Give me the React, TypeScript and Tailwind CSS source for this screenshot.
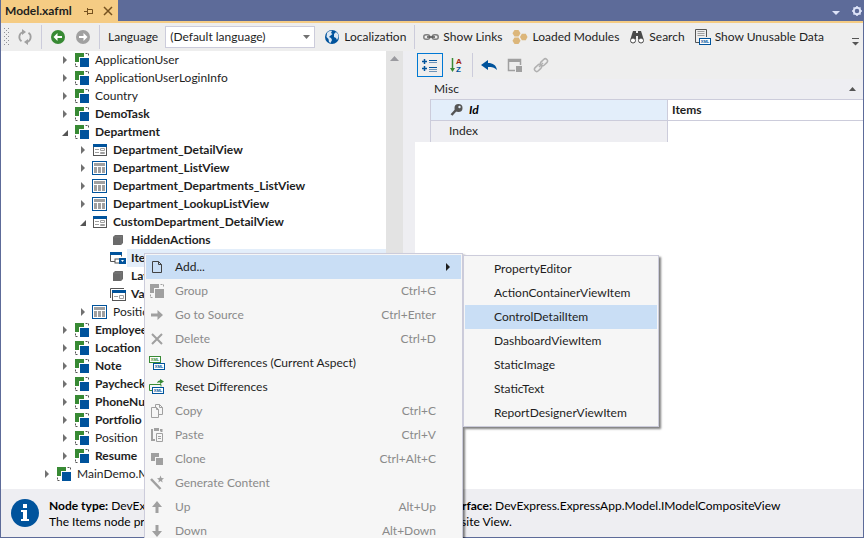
import React, { useState } from 'react';

type IconProps = { children: React.ReactNode; size?: number };

const Icon = ({ children, size = 16 }: IconProps) => (
  <svg width={size} height={size} viewBox={`0 0 ${size} ${size}`} fill="none" className="shrink-0" aria-hidden="true">
    {children}
  </svg>
);

const BLUE = '#00539c';
const GREEN = '#388a34';
const GRAY = '#a0a0a0';
const DARK = '#555555';

const ClassIcon = ({ back = GREEN, front = BLUE, marks = DARK }) => (
  <Icon>
    <path d="M1 1h9v4H5v5H1z" fill={back} />
    <path d="M11.500 1.500h3v3M1.500 11.500v3h3" stroke={marks} strokeDasharray="2 1" />
    <rect x="6" y="6" width="9" height="9" fill={front} />
  </Icon>
);

const DetailIcon = () => (
  <Icon>
    <rect x="1.500" y="2.500" width="13" height="11" fill="#fff" stroke={DARK} />
    <rect x="1" y="2" width="14" height="3" fill={BLUE} />
    <path d="M3 7.500h4M3 10.500h4" stroke={GRAY} />
    <path d="M8.500 6.500h4v2h-4zM8.500 10.500h4v1h-4z" stroke={GRAY} />
  </Icon>
);

const ListIcon = () => (
  <Icon>
    <rect x="0.500" y="1.500" width="14" height="13" fill="#fff" stroke={BLUE} />
    <path d="M2 3h11v3H2zM2 7h3v6H2zM6 7h3v6H6zM10 7h3v6h-3z" fill={GRAY} />
  </Icon>
);

const CubeIcon = () => (
  <Icon>
    <path d="M3 5l2-2h8v8l-2 2H3z" fill="#6a6a6a" />
    <path d="M3 5h8v8M11 5l2-2" stroke="#8a8a8a" strokeWidth="0.500" />
  </Icon>
);

const ItemsIcon = () => (
  <Icon>
    <path d="M0.500 2.500h11v4M0.500 2.500v9h5" stroke={DARK} />
    <rect x="0" y="2" width="12" height="3" fill={BLUE} />
    <rect x="5" y="9" width="5" height="4" fill="#fff" stroke={DARK} />
    <rect x="9" y="8" width="7" height="6" fill={BLUE} />
    <path d="M11 10h3l-1.500 2z" fill="#fff" />
  </Icon>
);

const ValidationIcon = () => (
  <Icon>
    <path d="M0.500 12V2.500H14" stroke={DARK} />
    <rect x="2.500" y="4.500" width="13" height="10" fill="#fff" stroke={DARK} />
    <rect x="2" y="4" width="14" height="3" fill={BLUE} />
    <path d="M4 10.500h4M9.500 9.500h4v3h-4z" stroke={GRAY} />
  </Icon>
);

const RefreshIcon = () => (
  <Icon>
    <path d="M4.500 12.200A5.200 5.200 0 0 1 6 3M11.500 3.800A5.200 5.200 0 0 1 10 13" stroke={GRAY} strokeWidth="1.800" />
    <path d="M5 0l4 3-4 3zM11 10l-4 3 4 3z" fill={GRAY} />
  </Icon>
);

const CircleArrow = ({ color, forward = false }: { color: string; forward?: boolean }) => (
  <Icon>
    <circle cx="8" cy="8" r="7" fill={color} />
    <path
      d={forward ? 'M12.500 8L8.500 4v3H4v2h4.500v3z' : 'M3.500 8l4-4v3H12v2H7.500v3z'}
      fill="#fff"
    />
  </Icon>
);

const GlobeIcon = () => (
  <Icon>
    <circle cx="8" cy="8" r="7" fill={BLUE} />
    <path d="M3 4c1.500-2 4-2.500 5-2l-1 2 1.500 1L6 7l-1 1 2 1 1 2-1.500 3-1.500-1-.5-3-2-2z" fill="#dbe7f3" />
    <path d="M10 5l2-2 2 2 .5 3-1.500 3-1-2-2-1z" fill="#dbe7f3" />
  </Icon>
);

const ShowLinksIcon = () => (
  <Icon>
    <rect x="0.750" y="5.750" width="6" height="4.500" rx="2.250" stroke="#808080" strokeWidth="1.500" />
    <rect x="9.250" y="5.750" width="6" height="4.500" rx="2.250" stroke="#808080" strokeWidth="1.500" />
    <path d="M4 8h8" stroke="#555" strokeWidth="1.500" />
  </Icon>
);

const ModulesIcon = () => (
  <Icon>
    <g fill="#dcb67a">
      <path d="M2.500 1h4l2 3.300-2 3.200h-4l-2-3.200z" />
      <path d="M2.500 8.500h4l2 3.200-2 3.300h-4l-2-3.300z" />
      <path d="M9.800 4.800h4L15.500 8l-1.700 3.300h-4L8 8z" />
    </g>
  </Icon>
);

const SearchIcon = () => (
  <Icon>
    <path d="M4 2h3v2h2V2h3l1 3 1.500 5H9V7H7v3H1.500L3 5z" fill="#4a4a4a" />
    <circle cx="4" cy="11.500" r="2.500" fill="#fff" stroke="#4a4a4a" />
    <circle cx="12" cy="11.500" r="2.500" fill="#fff" stroke="#4a4a4a" />
  </Icon>
);

const XmlTag = ({ x, y, color }: { x: number; y: number; color: string }) => (
  <g>
    <rect x={x + 0.5} y={y + 0.5} width="11" height="6" fill="#fff" stroke={color} />
    <text x={x + 6} y={y + 5} fontSize="4" fontWeight="700" textAnchor="middle" fill={color} fontFamily="Liberation Sans, sans-serif">
      XML
    </text>
  </g>
);

const UnusableIcon = () => (
  <Icon>
    <path d="M4 13.500H0.500V0.500h11V8" stroke={DARK} />
    <path d="M2.500 2.500h7M2.500 4.500h7M2.500 6.500h7" stroke={GRAY} />
    <XmlTag x={4} y={9} color={BLUE} />
  </Icon>
);

const DiffIcon = () => (
  <Icon>
    <XmlTag x={0} y={1} color={GREEN} />
    <XmlTag x={4} y={8} color={BLUE} />
  </Icon>
);

const ResetIcon = () => (
  <Icon>
    <path d="M3 11.500H0.500v-6h11.500v2" stroke={GREEN} />
    <path d="M8 4c.5-2 2-2.500 3-2.500V0l4 2.500L11 5V3.500c-1 0-2 0-3 .5z" fill={GREEN} />
    <XmlTag x={3} y={8} color={BLUE} />
  </Icon>
);

const FileIcon = () => (
  <Icon>
    <path d="M3.500 2.500h6l3 3v8h-9z" stroke="#424242" />
    <path d="M9.500 2.500v3h3" stroke="#424242" />
  </Icon>
);

const GoIcon = () => (
  <Icon>
    <path d="M2 6.500h6.500V3L14 8l-5.500 5V9.500H2z" fill={GRAY} />
  </Icon>
);

const DeleteIcon = () => (
  <Icon>
    <path d="M3 3l10 10M13 3L3 13" stroke={GRAY} strokeWidth="2" />
  </Icon>
);

const CopyIcon = () => (
  <Icon>
    <path d="M6.500 4V1.500h4l3 3v7H10" stroke={GRAY} />
    <path d="M2.500 4.500h5l2 2v8h-7zM10.500 1.500v3h3M7.500 4.500v2h2" stroke={GRAY} />
  </Icon>
);

const PasteIcon = () => (
  <Icon>
    <path d="M4 3H3v10h3M11 3h1.500v2" stroke={GRAY} strokeWidth="2" />
    <path d="M5 1h5v3H5z" fill={GRAY} />
    <path d="M7.500 6.500h6v8h-6zM9 9.500h3M9 11.500h3" stroke={GRAY} />
  </Icon>
);

const CloneIcon = () => (
  <Icon>
    <path d="M2 2h8v4H6v4H2z" fill={GRAY} />
    <path d="M7 7h7v7H7z" fill={GRAY} />
  </Icon>
);

const WandIcon = () => (
  <Icon>
    <path d="M2 4l9.500 10" stroke={GRAY} strokeWidth="2.500" />
    <path d="M11.500 0.500l1 2.500 2.500.2-2 1.700.7 2.600-2.200-1.400-2.200 1.400.7-2.600-2-1.700 2.500-.2z" fill={GRAY} />
  </Icon>
);

const VerticalArrow = ({ down = false }) => (
  <Icon>
    <path d={down ? 'M6.500 2h3v6H13l-5 6-5-6h3.500z' : 'M6.500 14h3V8H13L8 2 3 8h3.500z'} fill={GRAY} />
  </Icon>
);

const CategorizedIcon = () => (
  <Icon>
    <path d="M0 4.500h5M2.500 2v5M0 11.500h5M2.500 9v5" stroke={BLUE} strokeWidth="1.500" />
    <path d="M7 5.500h8M7 12.500h8M7 14.500h8" stroke="#6f94b8" />
    <path d="M7 3.500h8M7 10.500h8" stroke={BLUE} />
  </Icon>
);

const SortIcon = () => (
  <Icon>
    <path d="M4.500 1v11" stroke={GREEN} strokeWidth="1.500" />
    <path d="M2 11h5l-2.500 4z" fill={GREEN} />
    <text x="8" y="7" fontSize="8" fontWeight="700" fill="#a1260d" fontFamily="Liberation Sans, sans-serif">A</text>
    <text x="8" y="15" fontSize="8" fontWeight="700" fill={BLUE} fontFamily="Liberation Sans, sans-serif">Z</text>
  </Icon>
);

const UndoIcon = () => (
  <Icon>
    <path d="M0 8l7-5v3c5 0 8 2 9 7-2.500-2.500-5-3-9-3v3z" fill={BLUE} />
  </Icon>
);

const WindowIcon = () => (
  <Icon>
    <path d="M8 13.500H1.500v-11h12V8" stroke={GRAY} strokeWidth="1.500" />
    <path d="M1 2h13v3H1zM9 9h6v6H9z" fill={GRAY} />
  </Icon>
);

const ChainIcon = () => (
  <Icon>
    <g stroke="#b0b0b0" strokeWidth="1.500">
      <rect x="7" y="3" width="8" height="4.500" rx="2.250" transform="rotate(-45 11 5.250)" />
      <rect x="1" y="8.750" width="8" height="4.500" rx="2.250" transform="rotate(-45 5 11)" />
      <path d="M6 10l4-4" />
    </g>
  </Icon>
);

const KeyIcon = () => (
  <Icon>
    <circle cx="9.500" cy="6" r="4" fill={DARK} />
    <circle cx="10.500" cy="5" r="1.200" fill="#e3eefa" />
    <path d="M7 8l-4.500 5" stroke={DARK} strokeWidth="2.500" />
  </Icon>
);

const InfoIcon = () => (
  <Icon size={30}>
    <circle cx="15" cy="15" r="14" fill={BLUE} />
    <path d="M13 6h4v4h-4zM11 12h6v9h2v2h-8v-2h2v-7h-2z" fill="#fff" />
  </Icon>
);

type Node = { label: string; level: number; icon: React.ReactNode; bold?: boolean; state?: 'open' | 'closed' };

const nodes: Node[] = [
  { label: 'ApplicationUser', level: 1, icon: <ClassIcon />, state: 'closed' },
  { label: 'ApplicationUserLoginInfo', level: 1, icon: <ClassIcon />, state: 'closed' },
  { label: 'Country', level: 1, icon: <ClassIcon />, state: 'closed' },
  { label: 'DemoTask', level: 1, icon: <ClassIcon />, state: 'closed', bold: true },
  { label: 'Department', level: 1, icon: <ClassIcon />, state: 'open', bold: true },
  { label: 'Department_DetailView', level: 2, icon: <DetailIcon />, state: 'closed', bold: true },
  { label: 'Department_ListView', level: 2, icon: <ListIcon />, state: 'closed', bold: true },
  { label: 'Department_Departments_ListView', level: 2, icon: <ListIcon />, state: 'closed', bold: true },
  { label: 'Department_LookupListView', level: 2, icon: <ListIcon />, state: 'closed', bold: true },
  { label: 'CustomDepartment_DetailView', level: 2, icon: <DetailIcon />, state: 'open', bold: true },
  { label: 'HiddenActions', level: 3, icon: <CubeIcon />, bold: true },
  { label: 'Items', level: 3, icon: <ItemsIcon />, bold: true },
  { label: 'Layout', level: 3, icon: <CubeIcon />, bold: true },
  { label: 'Validation', level: 3, icon: <ValidationIcon />, bold: true },
  { label: 'Position_ListView', level: 2, icon: <ListIcon />, state: 'closed' },
  { label: 'Employee', level: 1, icon: <ClassIcon />, state: 'closed', bold: true },
  { label: 'Location', level: 1, icon: <ClassIcon />, state: 'closed', bold: true },
  { label: 'Note', level: 1, icon: <ClassIcon />, state: 'closed', bold: true },
  { label: 'Paycheck', level: 1, icon: <ClassIcon />, state: 'closed', bold: true },
  { label: 'PhoneNumber', level: 1, icon: <ClassIcon />, state: 'closed', bold: true },
  { label: 'Portfolio', level: 1, icon: <ClassIcon />, state: 'closed', bold: true },
  { label: 'Position', level: 1, icon: <ClassIcon />, state: 'closed' },
  { label: 'Resume', level: 1, icon: <ClassIcon />, state: 'closed', bold: true },
  { label: 'MainDemo.Module', level: 0, icon: <ClassIcon />, state: 'closed' },
];

const indents = ['pl-10', 'pl-[58px]', 'pl-[76px]', 'pl-[94px]'];

const menuItems = [
  { label: 'Add...', icon: <FileIcon />, enabled: true, submenu: true },
  { label: 'Group', icon: <ClassIcon back={GRAY} front={GRAY} marks={GRAY} />, keys: 'Ctrl+G' },
  { label: 'Go to Source', icon: <GoIcon />, keys: 'Ctrl+Enter' },
  { label: 'Delete', icon: <DeleteIcon />, keys: 'Ctrl+D' },
  { label: 'Show Differences (Current Aspect)', icon: <DiffIcon />, enabled: true },
  { label: 'Reset Differences', icon: <ResetIcon />, enabled: true },
  { label: 'Copy', icon: <CopyIcon />, keys: 'Ctrl+C' },
  { label: 'Paste', icon: <PasteIcon />, keys: 'Ctrl+V' },
  { label: 'Clone', icon: <CloneIcon />, keys: 'Ctrl+Alt+C' },
  { label: 'Generate Content', icon: <WandIcon /> },
  { label: 'Up', icon: <VerticalArrow />, keys: 'Alt+Up' },
  { label: 'Down', icon: <VerticalArrow down />, keys: 'Alt+Down' },
];

const addItems = [
  'PropertyEditor',
  'ActionContainerViewItem',
  'ControlDetailItem',
  'DashboardViewItem',
  'StaticImage',
  'StaticText',
  'ReportDesignerViewItem',
];

const Separator = () => <span className="w-px h-6 bg-[#ccccdb] shrink-0" />;

const TitleBar = () => (
  <header className="flex h-[21px] shrink-0 items-stretch justify-between">
    <div className="flex items-center gap-2 bg-[#f5cc84] pl-1 pr-1 w-[117px] text-[#1e1e1e]">
      <span className="font-bold mr-auto">Model.xafml</span>
      <button aria-label="Pin">
        <Icon size={10}>
          <path d="M0 5.500h3M3.500 2v7M4 3.500h4.500V7M4 7.500h5" stroke="#75511f" />
        </Icon>
      </button>
      <button aria-label="Close">
        <Icon size={12}>
          <path d="M2 2l8 8M10 2l-8 8" stroke="#75511f" strokeWidth="1.500" />
        </Icon>
      </button>
    </div>
    <div className="flex items-center gap-2">
      <button aria-label="Window list">
        <Icon size={10}>
          <path d="M1 5h8L5 9z" fill="#dde3f8" />
        </Icon>
      </button>
      <button aria-label="Options">
        <Icon size={14}>
          <circle cx="8" cy="7" r="3.250" stroke="#dde3f8" strokeWidth="2" />
          <path d="M8 2v2M8 10v2M3 7h2M11 7h2M4.500 3.500l1.500 1.500M10 9l1.500 1.500M11.500 3.500L10 5M6 9l-1.500 1.500" stroke="#dde3f8" strokeWidth="1.500" />
        </Icon>
      </button>
    </div>
  </header>
);

const Toolbar = () => {
  const [language, setLanguage] = useState('default');

  return (
    <div className="flex h-7 shrink-0 items-center bg-[#eeeeee] pl-[3px] pr-[2px] whitespace-nowrap">
      <svg width="6" height="18" className="shrink-0" aria-hidden="true">
        <defs>
          <pattern id="grip" width="4" height="4" patternUnits="userSpaceOnUse">
            <path d="M0 0h1v1H0zM2 2h1v1H2z" fill="#8f8f96" />
          </pattern>
        </defs>
        <rect width="5" height="18" fill="url(#grip)" />
      </svg>
      <div className="flex items-center gap-2 pl-[7px]">
        <button aria-label="Refresh"><RefreshIcon /></button>
        <Separator />
        <button aria-label="Back"><CircleArrow color={GREEN} /></button>
        <button aria-label="Forward" className="pl-px"><CircleArrow color={GRAY} forward /></button>
        <Separator />
        <label htmlFor="language">Language</label>
      </div>
      <div className="relative ml-[7px]">
        <select
          id="language"
          value={language}
          onChange={(e) => setLanguage(e.target.value)}
          className="block w-[150px] h-[22px] appearance-none border border-[#ccccdb] bg-white pl-1 pr-4"
        >
          <option value="default">(Default language)</option>
        </select>
        <svg width="8" height="4" className="absolute right-1 top-[9px] pointer-events-none" aria-hidden="true">
          <path d="M0 0h7L3.500 4z" fill="#717171" />
        </svg>
      </div>
      <button className="flex items-center gap-1 ml-[9px] mr-2"><GlobeIcon />Localization</button>
      <Separator />
      <div className="flex items-center gap-[10px] pl-2">
        <button className="flex items-center gap-1"><ShowLinksIcon />Show Links</button>
        <button className="flex items-center gap-1"><ModulesIcon />Loaded Modules</button>
        <button className="flex items-center gap-1"><SearchIcon />Search</button>
        <button className="flex items-center gap-1"><UnusableIcon />Show Unusable Data</button>
      </div>
      <button aria-label="More" className="ml-auto self-end pb-[5px]">
        <Icon size={10}>
          <path d="M1 2.500h7" stroke={DARK} />
          <path d="M1 6h7L4.500 9.500z" fill={DARK} />
        </Icon>
      </button>
    </div>
  );
};

const ModelTree = () => {
  const [selected, setSelected] = useState('Items');

  return (
    <div className="flex w-[402px] shrink-0 bg-white">
      <ul role="tree" className="flex-1 min-w-0 overflow-hidden">
        {nodes.map((node) => (
          <li
            key={node.label}
            role="treeitem"
            aria-selected={selected === node.label}
            aria-expanded={node.state ? node.state === 'open' : undefined}
            onClick={() => setSelected(node.label)}
            className={`flex h-[18px] items-center ${indents[node.level]}`}
          >
            <svg width="15" height="10" className="shrink-0" aria-hidden="true">
              {node.state === 'closed' && <path d="M4 1l4 4-4 4z" fill="#717171" />}
              {node.state === 'open' && <path d="M9 3v6H3z" fill="#555" />}
            </svg>
            {node.icon}
            <span
              className={`flex-1 ml-px pl-1 leading-[18px] whitespace-nowrap ${node.bold ? 'font-bold' : ''} ${
                selected === node.label ? 'bg-[#e3eefa]' : ''
              }`}
            >
              {node.label}
            </span>
          </li>
        ))}
      </ul>
      <div className="w-[17px] shrink-0 bg-[#e3e3e3] flex flex-col items-center pt-[5px]">
        <svg width="9" height="5" aria-hidden="true">
          <path d="M0 5h9L4.500 0z" fill="#9a9a9f" />
        </svg>
      </div>
    </div>
  );
};

const PropertyPanel = () => (
  <section className="flex-1 min-w-0 flex flex-col bg-white">
    <div className="flex h-7 shrink-0 items-center bg-[#eeeeee] pl-[2px]">
      <button aria-label="Categorized" className="flex h-6 w-[26px] items-center justify-center border border-[#0078d4]">
        <CategorizedIcon />
      </button>
      <button aria-label="Alphabetical" className="ml-[5px] mr-2"><SortIcon /></button>
      <Separator />
      <div className="flex items-center gap-[10px] pl-2">
        <button aria-label="Undo"><UndoIcon /></button>
        <button aria-label="Show window"><WindowIcon /></button>
        <button aria-label="Follow link"><ChainIcon /></button>
      </div>
    </div>
    <div className="bg-[#eeeef2]">
      <div className="flex h-5 items-center justify-between pl-[19px] pr-[6px]">
        <span>Misc</span>
        <svg width="8" height="4" aria-hidden="true">
          <path d="M0 4h7L3.500 0z" fill="#555" />
        </svg>
      </div>
      <div className="pl-[15px]">
        <table className="w-full table-fixed border-collapse text-left">
          <tbody>
            <tr className="h-[21px] border-t border-[#ccccdb]">
              <th className="w-[237px] border-x border-[#ccccdb] bg-[#e3eefa] p-0 pl-[18px]">
                <span className="flex items-center gap-1 italic leading-5 text-black"><KeyIcon />Id</span>
              </th>
              <td className="bg-white p-0 pl-1 font-bold">Items</td>
            </tr>
            <tr className="h-[21px] border-t border-[#ccccdb]">
              <th className="border-x border-[#ccccdb] p-0 pl-[18px] font-normal leading-5">Index</th>
              <td className="bg-white p-0" />
            </tr>
          </tbody>
        </table>
      </div>
    </div>
  </section>
);

const StatusPanel = () => (
  <footer className="flex h-12 shrink-0 items-center gap-[9px] bg-[#eeeef2] pl-[9px] text-black whitespace-nowrap">
    <InfoIcon />
    <div className="leading-4 pt-[2px]">
      <p className="flex">
        <span className="w-[392px]"><b>Node type:</b> DevExpress.ExpressApp.Model.IModelViewItems</span>
        <span><b>Interface:</b> DevExpress.ExpressApp.Model.IModelCompositeView</span>
      </p>
      <p>The Items node provides access to View Items contained in the current Composite View.</p>
    </div>
  </footer>
);

const AddMenu = () => (
  <ul role="menu" className="absolute left-full top-0 ml-[2px] w-[196px] border border-[#ccccdb] bg-[#f6f6f6] p-px shadow-[2px_2px_2px_rgba(0,0,0,0.5)]">
    {addItems.map((label) => (
      <li key={label}>
        <button
          role="menuitem"
          className={`block h-6 w-full pl-[29px] text-left ${label === 'ControlDetailItem' ? 'bg-[#c9def5]' : ''}`}
        >
          {label}
        </button>
      </li>
    ))}
  </ul>
);

const ContextMenu = () => (
  <ul role="menu" className="absolute left-36 top-[253px] w-[319px] border border-[#ccccdb] bg-[#f6f6f6] p-px shadow-[2px_2px_2px_rgba(0,0,0,0.5)]">
    {menuItems.map((item) => (
      <li key={item.label} className={item.submenu ? 'relative' : ''}>
        <button
          role="menuitem"
          disabled={!item.enabled}
          className={`flex h-6 w-full items-center pl-[3px] pr-[25px] ${
            item.enabled ? 'text-[#1e1e1e]' : 'text-[#8a8a8a]'
          } ${item.submenu ? 'bg-[#c9def5]' : ''}`}
        >
          {item.icon}
          <span className="pl-[10px]">{item.label}</span>
          {item.keys && <span className="ml-auto">{item.keys}</span>}
          {item.submenu && (
            <svg width="4" height="8" className="absolute right-[11px] top-2" aria-hidden="true">
              <path d="M0 0v8l4-4z" fill="#1e1e1e" />
            </svg>
          )}
        </button>
        {item.submenu && <AddMenu />}
      </li>
    ))}
  </ul>
);

const App = () => (
  <div className="relative flex h-screen flex-col overflow-hidden bg-[#5d6b99] px-px pb-px font-['Lato',sans-serif] text-[12px] leading-4 text-[#1e1e1e]">
    <TitleBar />
    <div className="h-[2px] shrink-0 bg-[#f5cc84]" />
    <Toolbar />
    <main className="flex flex-1 min-h-0 bg-[#eeeef2] gap-3">
      <ModelTree />
      <PropertyPanel />
    </main>
    <StatusPanel />
    <ContextMenu />
  </div>
);

export default App;
